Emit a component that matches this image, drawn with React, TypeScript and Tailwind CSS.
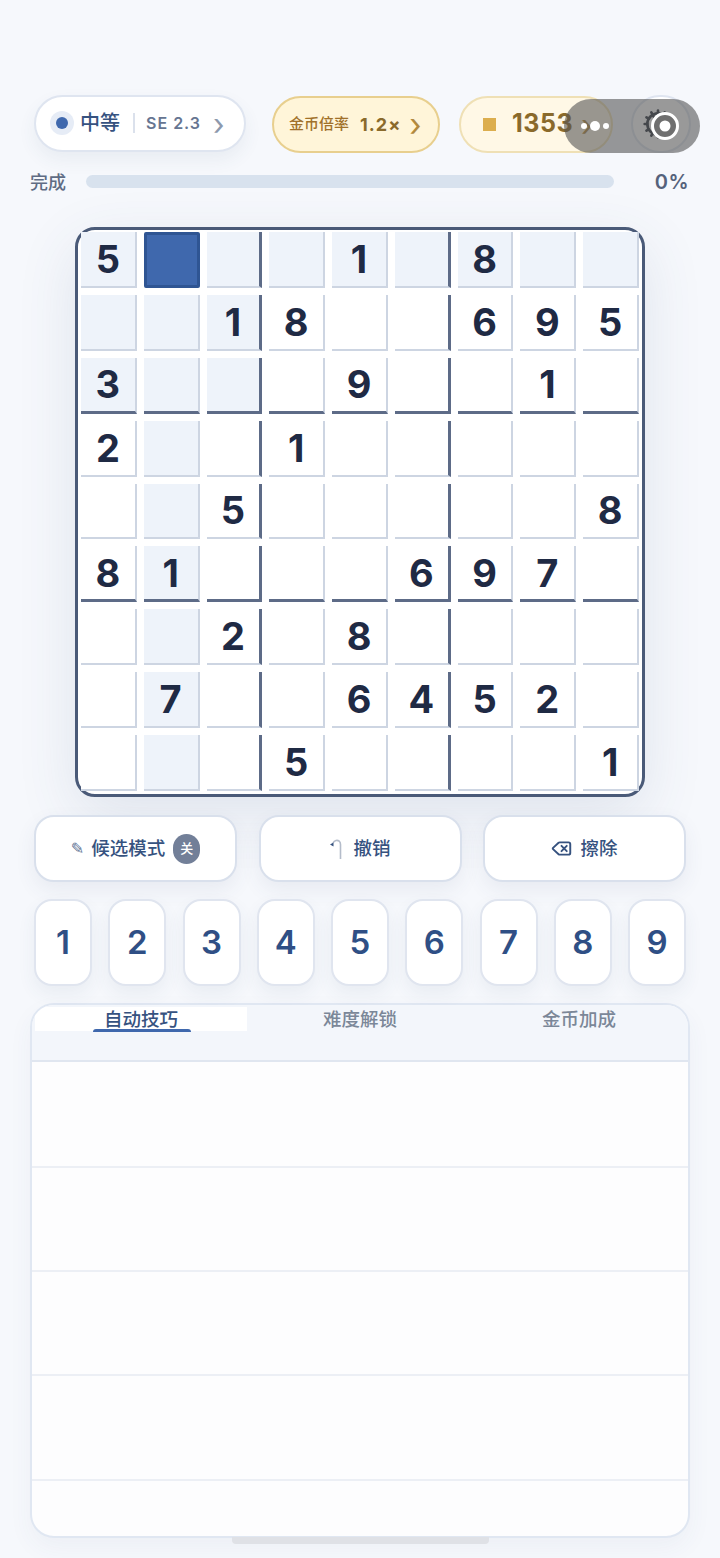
import { Cog, Delete } from "lucide-react";

const board = [
  "5...1.8..",
  "..18..695",
  "3...9..1.",
  "2..1.....",
  "..5.....8",
  "81...697.",
  "..2.8....",
  ".7..6452.",
  "...5....1",
];

function Cell({ value, row, col }: { value: string; row: number; col: number }) {
  const selected = row === 0 && col === 1;
  const peer = row === 0 || col === 1 || (row < 3 && col < 3);
  const thickRight = col === 2 || col === 5;
  const thickBottom = row === 2 || row === 5;
  if (selected) {
    return <div className="bg-[#3f68ad] border-[3px] border-[#2f5593] rounded-[2px]" />;
  }
  return (
    <div
      className={`flex items-center justify-center text-[38px] leading-none font-bold text-[#1f2a44] ${
        thickRight ? "border-r-[3px] border-r-[#5d6b87]" : "border-r-2 border-r-[#cdd5e2]"
      } ${thickBottom ? "border-b-[3px] border-b-[#5d6b87]" : "border-b-2 border-b-[#cdd5e2]"} ${
        peer ? "bg-[#eef3fa]" : "bg-white"
      }`}
    >
      {value === "." ? "" : value}
    </div>
  );
}

function ActionButton({ children }: { children: React.ReactNode }) {
  return (
    <button className="w-[203px] h-[67px] flex items-center justify-center gap-2 rounded-[20px] bg-white border-2 border-[#d9e0ec] shadow-[0_8px_20px_rgba(60,80,120,0.08)] text-[18.5px] font-medium text-[#36527f]">
      {children}
    </button>
  );
}

export default function App() {
  return (
    <div
      className="relative h-[1558px] w-[720px] overflow-hidden bg-[#f6f8fc] pt-[95px]"
      style={{ fontFamily: 'Inter, "Noto Sans CJK SC", sans-serif' }}
    >
      {/* top chips */}
      <div className="flex items-center pl-[34px] w-[760px]">
        <div className="-mt-[2px] w-[212px] h-[57px] flex items-center pl-[14px] rounded-full bg-white border-2 border-[#dfe5f0] shadow-[0_8px_18px_rgba(60,80,120,0.07)]">
          <span className="w-6 h-6 flex items-center justify-center rounded-full bg-[#e6ecf6]">
            <span className="w-3 h-3 rounded-full bg-[#3f68ad]" />
          </span>
          <span className="ml-[6px] text-[20px] font-medium text-[#36527f]">中等</span>
          <span className="ml-[13px] w-[2px] h-5 bg-[#dbe1ec]" />
          <span className="ml-[11px] text-[16px] font-semibold tracking-[1px] text-[#667591]">SE 2.3</span>
          <span className="ml-[12px] mt-[2px] text-[30px] leading-none font-normal text-[#8d99ad]">›</span>
        </div>
        <div className="ml-[26px] w-[168px] h-[57px] flex items-center pl-[15px] rounded-full bg-[#fff5d9] border-2 border-[#e8cf8e]">
          <span className="text-[15px] font-medium text-[#a1712a]">金币倍率</span>
          <span className="ml-[11px] text-[18px] font-bold tracking-[1px] text-[#8a6a2b]">1.2×</span>
          <span className="ml-[8px] mt-[2px] text-[32px] leading-none font-normal text-[#b38a3e]">›</span>
        </div>
        <div className="ml-[19px] w-[154px] h-[57px] flex items-center pl-[22px] rounded-full bg-[#fff8e6] border-2 border-[#efe0b5]">
          <span className="w-[13px] h-[13px] bg-[#dcae4e]" />
          <span className="ml-4 text-[25px] font-bold tracking-[0.5px] text-[#8a6a2b]">1353</span>
          <span className="ml-[8px] mt-[2px] text-[30px] leading-none font-normal text-[#b38a3e]">›</span>
        </div>
        <div className="ml-[18px] w-[60px] h-[58px] flex items-center pl-[9px] rounded-full bg-white border-2 border-[#dfe5f0]">
          <Cog size={32} strokeWidth={2} className="text-[#2f3540]" />
        </div>
      </div>

      {/* mini program capsule */}
      <div className="absolute left-[564px] top-[99px] w-[136px] h-[54px] flex items-center rounded-full bg-[rgba(85,85,85,0.6)]">
        <span className="ml-[17px] flex items-center gap-[3px]">
          <span className="w-[6px] h-[6px] rounded-full bg-white" />
          <span className="w-[10px] h-[10px] rounded-full bg-white" />
          <span className="w-[6px] h-[6px] rounded-full bg-white" />
        </span>
        <svg className="absolute left-[86px] top-[12px]" width="30" height="30" viewBox="0 0 30 30">
          <circle cx="15" cy="15" r="12.5" fill="#6f6f6f" stroke="#fff" strokeWidth="3" />
          <circle cx="15" cy="15" r="5.5" fill="#fff" />
        </svg>
      </div>

      {/* progress */}
      <div className="mt-[18px] flex items-center pl-[30px] pr-[31px] h-[20px]">
        <span className="w-[56px] mt-[2px] text-[18px] font-medium text-[#5f6c84]">完成</span>
        <div className="w-[528px] h-[13px] rounded-full bg-[#d8e2ee]" />
        <span className="ml-auto mt-[2px] text-[20px] font-semibold tracking-[0.5px] text-[#55627b]">0%</span>
      </div>

      {/* board */}
      <div className="mt-[36px] ml-[75px] w-[570px] h-[570px] rounded-[20px] border-[3px] border-[#4a5a78] bg-white pt-[2px] px-[3px] pb-[3px] shadow-[0_18px_60px_rgba(60,80,120,0.12)]">
        <div className="grid grid-cols-9 grid-rows-9 gap-[7px] h-full">
          {board.map((line, r) =>
            line.split("").map((v, c) => <Cell key={`${r}-${c}`} value={v} row={r} col={c} />)
          )}
        </div>
      </div>

      {/* actions */}
      <div className="mt-[18px] px-[34px] flex justify-between">
        <ActionButton>
          <span className="-mr-[1px] text-[16px] font-normal text-[#5f7596]" style={{ fontFamily: '"DejaVu Sans", sans-serif' }}>✎</span>
          <span>候选模式</span>
          <span className="w-[27px] h-[30px] flex items-center justify-center rounded-full bg-[#727f98] text-[13px] font-medium text-white">关</span>
        </ActionButton>
        <ActionButton>
          <svg className="mr-[2px]" width="14" height="22" viewBox="0 0 14 22" fill="none">
            <path d="M11.5 21V6.5C11.5 3.5 9.5 2 7 2.5C5.5 2.8 4.5 4 4 5" stroke="#b4bcca" strokeWidth="1.6" />
            <path d="M1 6.5L4.5 4.5V8.5Z" fill="#36527f" />
          </svg>
          <span>撤销</span>
        </ActionButton>
        <ActionButton>
          <Delete size={21} strokeWidth={2.2} className="text-[#36527f]" />
          <span>擦除</span>
        </ActionButton>
      </div>

      {/* number pad */}
      <div className="mt-[17px] px-[34px] flex justify-between">
        {[1, 2, 3, 4, 5, 6, 7, 8, 9].map((n) => (
          <button
            key={n}
            className="w-[58px] h-[87px] flex items-center justify-center rounded-[18px] bg-white border-2 border-[#e0e5ef] shadow-[0_8px_18px_rgba(60,80,120,0.07)] text-[33px] font-semibold text-[#2f4f85]"
          >
            {n}
          </button>
        ))}
      </div>

      {/* lower panel */}
      <div className="mt-[17px] ml-[30px] w-[660px] h-[535px] flex flex-col rounded-[24px] overflow-hidden bg-[#fdfdfe] border-2 border-[#e0e7f2] shadow-[0_10px_24px_rgba(60,80,120,0.05)]">
        <div className="h-[57px] shrink-0 bg-[#f3f6fb] border-b-2 border-[#e0e6f0] pt-[2px] pl-[3px] flex items-start">
          <div className="relative w-[212px] h-[24px] bg-white flex justify-center text-[18.5px] leading-[24px] font-medium text-[#36527f]">
            自动技巧
            <span className="absolute left-[58px] top-[22px] w-[98px] h-[3px] rounded-t-full bg-[#3f68ad]" />
          </div>
          <div className="w-[226px] text-center text-[18.5px] leading-[24px] font-medium text-[#7b8798]">难度解锁</div>
          <div className="w-[212px] text-center text-[18.5px] leading-[24px] font-medium text-[#7b8798]">金币加成</div>
        </div>
        {[106, 104, 104, 105].map((h, i) => (
          <div key={i} style={{ height: h }} className="shrink-0 border-b-2 border-[#eceff5]" />
        ))}
      </div>

      {/* home bar */}
      <div className="absolute left-[232px] top-[1537px] w-[257px] h-[7px] rounded-b-[4px] bg-[#dfe1e6]" />
    </div>
  );
}
